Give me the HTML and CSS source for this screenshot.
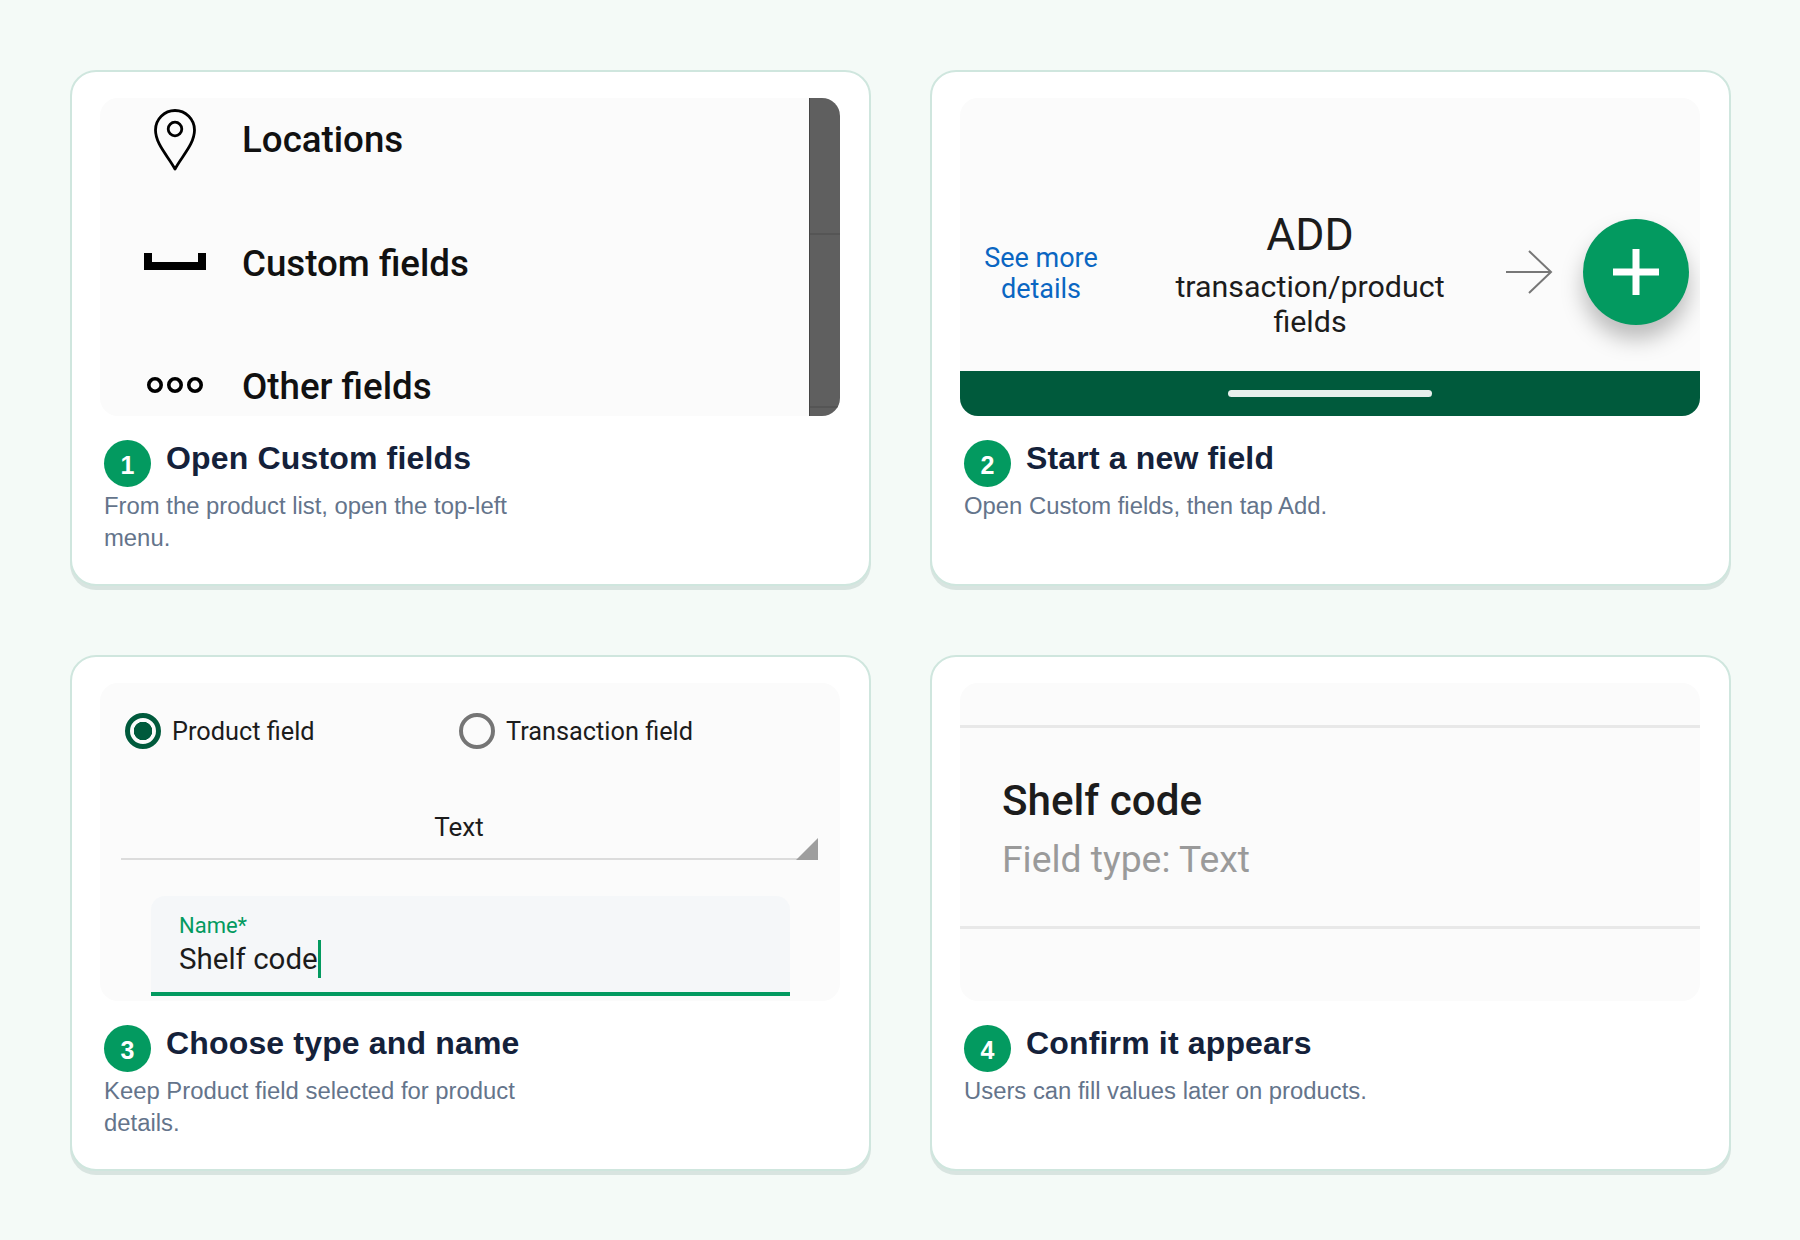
FILE: index.html
```html
<!DOCTYPE html>
<html lang="en">
<head>
<meta charset="utf-8">
<title>Custom fields steps</title>
<link rel="stylesheet" href="styles.css">
</head>
<body>
<main class="grid">
  <article class="card">
    <div class="screen screen-menu">
      <ul class="menu">
        <li class="menu-row">
          <span class="menu-icon menu-icon-pin">
            <svg width="44" height="62" viewBox="0 0 44 62"><path d="M22 60 C15 47 2.5 35 2.5 21 A19.5 19.5 0 0 1 41.5 21 C41.5 35 29 47 22 60 Z" fill="none" stroke="#000" stroke-width="2.8" stroke-linejoin="round"/><circle cx="22" cy="20" r="6.8" fill="none" stroke="#000" stroke-width="2.8"/></svg>
          </span>
          <span>Locations</span>
        </li>
        <li class="menu-row">
          <span class="menu-icon">
            <svg width="62" height="17" viewBox="0 0 62 17"><path d="M0 0H8V9H54V0H62V17H0Z" fill="#000"/></svg>
          </span>
          <span>Custom fields</span>
        </li>
        <li class="menu-row">
          <span class="menu-icon">
            <svg width="58" height="20" viewBox="0 0 58 20"><g fill="none" stroke="#000" stroke-width="3.6"><circle cx="9" cy="10" r="6.2"/><circle cx="29" cy="10" r="6.2"/><circle cx="49" cy="10" r="6.2"/></g></svg>
          </span>
          <span>Other fields</span>
        </li>
      </ul>
      <div class="scrollbar"><span class="scroll-seam"></span><span class="scroll-seam"></span></div>
    </div>
    <div class="caption">
      <div class="caption-head"><span class="badge">1</span><h2>Open Custom fields</h2></div>
      <p>From the product list, open the top-left menu.</p>
    </div>
  </article>

  <article class="card">
    <div class="screen screen-add">
      <div class="add-main">
        <a class="see-more">See more details</a>
        <div class="add-text">
          <div class="add-title">ADD</div>
          <div class="add-sub">transaction/product fields</div>
        </div>
        <svg class="arrow" width="48" height="44" viewBox="0 0 48 44"><path d="M1 22H46M24 1L46 22L24 43" fill="none" stroke="#777" stroke-width="2"/></svg>
        <div class="fab">
          <svg width="46" height="46" viewBox="0 0 46 46"><path d="M0 23H46M23 0V46" stroke="#fff" stroke-width="7"/></svg>
        </div>
      </div>
      <div class="nav-bar"><span class="nav-handle"></span></div>
    </div>
    <div class="caption">
      <div class="caption-head"><span class="badge">2</span><h2>Start a new field</h2></div>
      <p>Open Custom fields, then tap Add.</p>
    </div>
  </article>

  <article class="card">
    <div class="screen screen-form">
      <div class="radios">
        <label class="radio-option"><span class="radio radio-on"></span><span class="radio-text">Product field</span></label>
        <label class="radio-option"><span class="radio"></span><span class="radio-text">Transaction field</span></label>
      </div>
      <div class="select">Text</div>
      <div class="input">
        <div class="input-label">Name*</div>
        <div class="input-value"><span class="caret-text">Shelf code</span></div>
      </div>
    </div>
    <div class="caption">
      <div class="caption-head"><span class="badge">3</span><h2>Choose type and name</h2></div>
      <p>Keep Product field selected for product details.</p>
    </div>
  </article>

  <article class="card">
    <div class="screen screen-result">
      <div class="result">
        <div class="result-name">Shelf code</div>
        <div class="result-type">Field type: Text</div>
      </div>
    </div>
    <div class="caption">
      <div class="caption-head"><span class="badge">4</span><h2>Confirm it appears</h2></div>
      <p>Users can fill values later on products.</p>
    </div>
  </article>
</main>
</body>
</html>
```

FILE: styles.css
```css
* { box-sizing: border-box; }
html, body { margin: 0; padding: 0; }
body {
  background: #f4faf7;
  font-family: "Liberation Sans", Arial, sans-serif;
  width: 1800px;
  height: 1240px;
  overflow: hidden;
}
.grid {
  display: grid;
  grid-template-columns: 801px 801px;
  grid-auto-rows: 516px;
  column-gap: 59px;
  row-gap: 69px;
  padding: 70px;
}
.card {
  background: #fff;
  border: 2px solid #cfe6de;
  border-radius: 26px;
  padding: 26px 29px 26px 28px;
  box-shadow: 0 4px 0 #d8e4e0;
}
.screen {
  height: 318px;
  background: #fbfbfb;
  border-radius: 18px;
  overflow: hidden;
  font-family: Roboto, sans-serif;
  color: #1c1c1c;
}
.caption { margin-top: 24px; padding-left: 4px; }
.caption-head { display: flex; gap: 15px; align-items: flex-start; }
.badge {
  flex: none;
  width: 47px;
  height: 47px;
  border-radius: 50%;
  background: #039a60;
  color: #fff;
  font-weight: 700;
  font-size: 25px;
  line-height: 50px;
  text-align: center;
}
.caption h2 {
  margin: 0;
  font-size: 32px;
  letter-spacing: .16px;
  line-height: 36px;
  font-weight: 700;
  color: #14213a;
}
.caption p {
  margin: 3px 0 0;
  width: 420px;
  font-size: 23.85px;
  line-height: 32px;
  color: #64748b;
}

/* step 1 */
.screen-menu { display: flex; }
.menu { flex: 1; margin: -20px 0 0; padding: 0; list-style: none; }
.menu-row {
  display: flex;
  align-items: center;
  height: 123.5px;
  font-size: 36.7px;
  font-weight: 500;
  color: #111;
}
.menu-icon {
  flex: none;
  width: 142px;
  padding: 0 36px 4px 44px;
  display: flex;
  justify-content: center;
}
.menu-icon-pin { padding: 0 36px 0 44px; }
.scrollbar {
  flex: none;
  width: 31.5px;
  background: #5f5f5f;
  border-left: 1px solid #454545;
  padding-top: 135px;
}
.scroll-seam { display: block; height: 2px; background: #555; margin-bottom: 171px; }

/* step 2 */
.screen-add { display: flex; flex-direction: column; }
.add-main {
  flex: 1;
  display: flex;
  align-items: center;
  padding: 75px 11.5px 0 6px;
}
.see-more {
  flex: none;
  width: 150px;
  margin-top: 3px;
  font-size: 27px;
  line-height: 31px;
  text-align: center;
  color: #0a66c2;
  padding: 0 15px;
}
.add-text { flex: none; width: 300px; margin-left: 44px; padding-top: 3px; text-align: center; }
.add-title { font-size: 44.5px; line-height: 52px; margin-bottom: 8px; }
.add-sub { font-size: 30.4px; line-height: 35px; padding: 0 10px; }
.arrow { flex: none; margin-left: 45px; margin-right: 29.5px; }
.fab {
  flex: none;
  width: 106px;
  height: 106px;
  border-radius: 50%;
  background: #039a60;
  box-shadow: 0 14px 22px rgba(0, 0, 0, .26);
  display: flex;
  align-items: center;
  justify-content: center;
}
.nav-bar {
  flex: none;
  height: 45px;
  background: #005a3c;
  display: flex;
  justify-content: center;
  padding-top: 19px;
}
.nav-handle { width: 204px; height: 7px; border-radius: 4px; background: #e7efec; }

/* step 3 */
.screen-form { padding-top: 29px; }
.radios { display: flex; padding-left: 25px; }
.radio-option {
  flex: none;
  width: 334px;
  display: flex;
  align-items: center;
  gap: 11px;
  font-size: 25.3px;
  line-height: 36px;
  color: #1c1c1c;
}
.radio-text { padding-top: 2px; }
.radio {
  flex: none;
  width: 36px;
  height: 36px;
  border: 4px solid #757575;
  border-radius: 50%;
}
.radio-on {
  border: 5px solid #005a3c;
  background: radial-gradient(circle, #005a3c 0 9px, transparent 9.5px);
}
.select {
  position: relative;
  margin: 57px 22px 0 21px;
  padding: 0 21px 11px 0;
  border-bottom: 2px solid #dcdcdc;
  font-size: 26px;
  line-height: 40px;
  text-align: center;
  color: #1c1c1c;
}
.select::after {
  content: "";
  position: absolute;
  right: 0;
  bottom: -2px;
  width: 22px;
  height: 22px;
  background: #9e9e9e;
  clip-path: polygon(100% 0, 100% 100%, 0 100%);
}
.input {
  margin: 36px 50px 0 51px;
  height: 100px;
  padding: 17px 0 0 28px;
  background: #f5f7f9;
  border-radius: 14px 14px 0 0;
  border-bottom: 4px solid #039a60;
}
.input-label { font-size: 22px; line-height: 26px; color: #039a60; }
.input-value { font-size: 29.5px; line-height: 39px; padding-top: 1px; color: #1c1c1c; }
.caret-text { display: inline-block; height: 38px; line-height: 38px; border-right: 3px solid #039a60; }

/* step 4 */
.result {
  margin-top: 42px;
  height: 204px;
  padding: 48px 0 0 42px;
  border-top: 3px solid #e8e8e8;
  border-bottom: 3px solid #e8e8e8;
}
.result-name { font-size: 42.2px; line-height: 50px; font-weight: 500; color: #1c1c1c; }
.result-type { font-size: 37.3px; line-height: 46px; margin-top: 10px; color: #9a9a9a; }
```
